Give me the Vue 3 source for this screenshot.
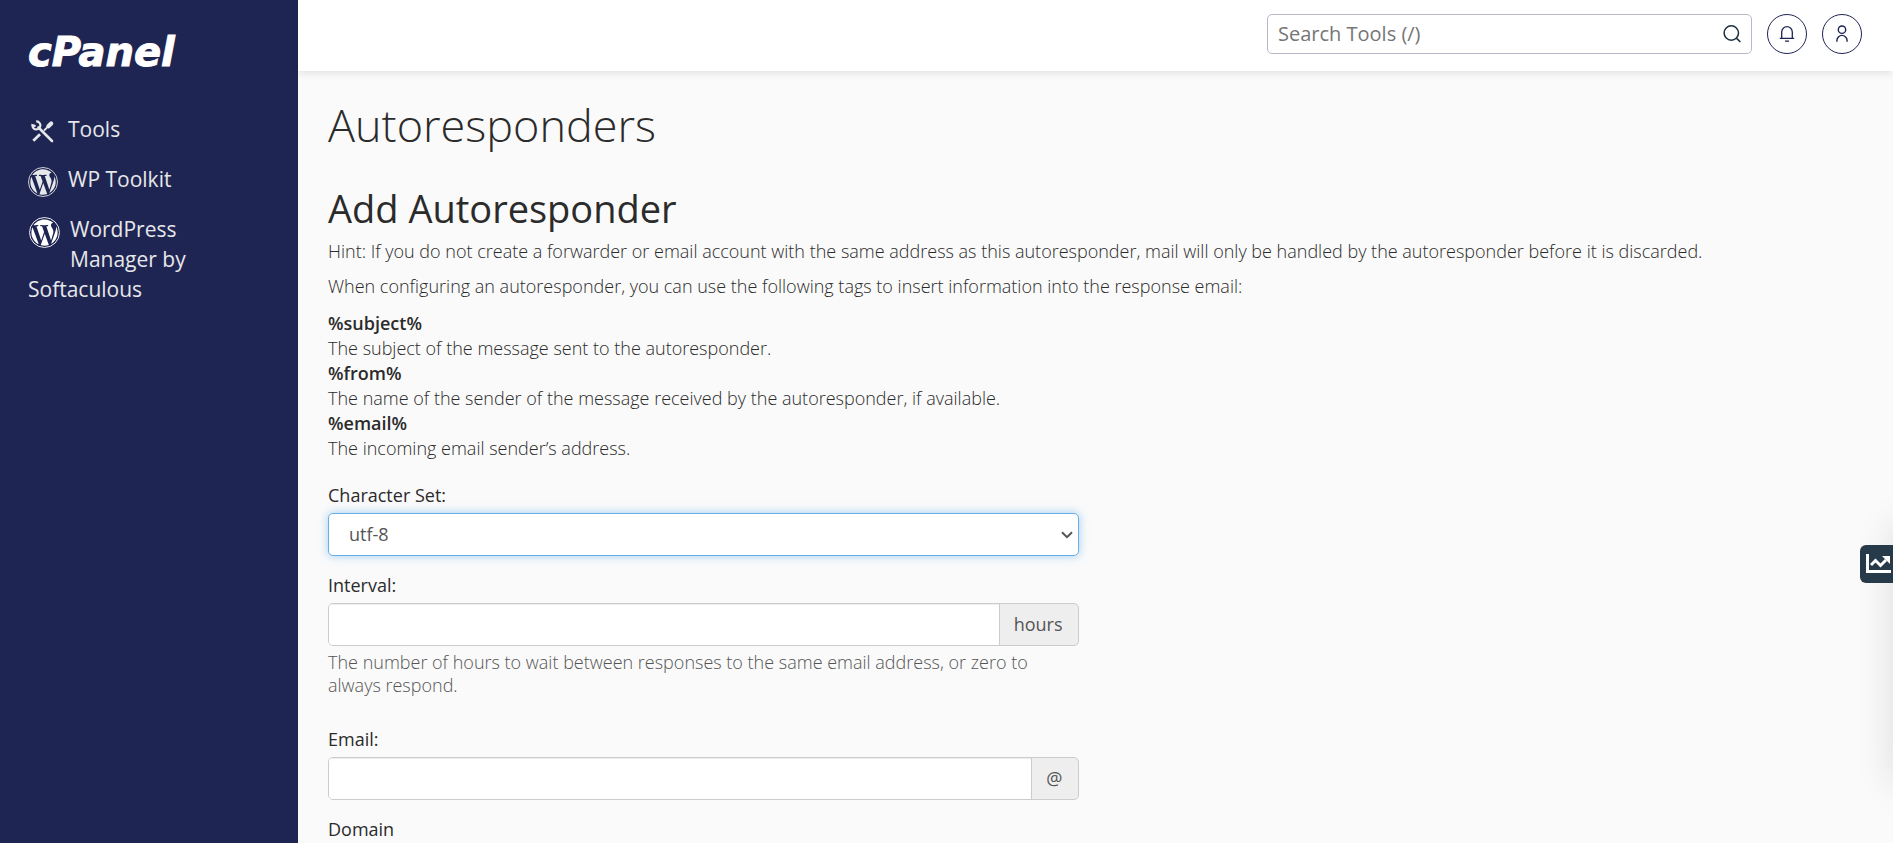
<script setup>
import { ref } from 'vue'

const charset = ref('utf-8')
const interval = ref('')
const email = ref('')
const search = ref('')

const tags = [
  { name: '%subject%', text: 'The subject of the message sent to the autoresponder.' },
  { name: '%from%', text: 'The name of the sender of the message received by the autoresponder, if available.' },
  { name: '%email%', text: 'The incoming email sender’s address.' },
]

const wpPath =
  'M21.469 6.825c.84 1.537 1.318 3.3 1.318 5.175 0 3.979-2.156 7.456-5.363 9.325l3.295-9.527c.615-1.54.82-2.771.82-3.864 0-.405-.026-.78-.07-1.11m-7.981.105c.647-.03 1.232-.105 1.232-.105.582-.075.514-.93-.067-.899 0 0-1.755.135-2.88.135-1.064 0-2.85-.15-2.85-.15-.585-.03-.661.855-.075.885 0 0 .54.061 1.125.09l1.68 4.605-2.37 7.08L5.354 6.9c.649-.03 1.234-.1 1.234-.1.585-.075.516-.93-.065-.896 0 0-1.746.138-2.874.138-.2 0-.438-.008-.69-.015C4.911 3.15 8.235 1.215 12 1.215c2.809 0 5.365 1.072 7.286 2.833-.046-.003-.091-.009-.141-.009-1.06 0-1.812.923-1.812 1.914 0 .89.513 1.643 1.06 2.531.411.72.89 1.643.89 2.977 0 .915-.354 1.994-.821 3.479l-1.075 3.585-3.9-11.61.001.014zM12 22.784c-1.059 0-2.081-.153-3.048-.437l3.237-9.406 3.315 9.087c.024.053.05.101.078.149-1.12.393-2.325.609-3.582.609M1.211 12c0-1.564.336-3.05.935-4.39L7.29 21.709C3.694 19.96 1.212 16.271 1.211 12'
</script>

<template>
  <div class="layout">
    <aside class="sidebar">
      <a class="logo" href="#" aria-label="cPanel home">cPanel</a>
      <nav class="nav" aria-label="Main">
        <a class="nav-item" href="#">
          <svg class="nav-icon" viewBox="0 0 30 30" aria-hidden="true">
            <g fill="none" stroke="currentColor" stroke-linecap="round">
              <path d="M10.5 10.5 24 24" stroke-width="2.6" />
              <path d="M5.3 23.7 12 17.2" stroke-width="2.8" stroke-linecap="butt" />
              <path d="M16.5 13 20 9.6" stroke-width="1.8" />
              <path d="M20.4 9.2 23.2 6.4" stroke-width="4.2" />
              <path d="M8.2 4.4a4 4 0 1 1-3.8 3.8L7.6 9" stroke-width="2.2" stroke-linecap="butt" />
            </g>
          </svg>
          Tools
        </a>
        <a class="nav-item" href="#">
          <svg class="nav-icon" viewBox="0 0 24 24" aria-hidden="true">
            <circle cx="12" cy="12" r="11.6" fill="none" stroke="currentColor" stroke-width=".7" />
            <path :d="wpPath" fill="currentColor" transform="translate(.7 .7) scale(.942)" />
          </svg>
          WP Toolkit
        </a>
        <a class="nav-item" href="#">
          <svg class="nav-icon nav-icon-plugin" viewBox="0 0 24 24" aria-hidden="true">
            <circle cx="12" cy="12" r="11.6" fill="none" stroke="currentColor" stroke-width=".7" />
            <path :d="wpPath" fill="currentColor" transform="translate(.7 .7) scale(.942)" />
          </svg>
          WordPress Manager by Softaculous
        </a>
      </nav>
    </aside>

    <div class="page">
      <header class="topbar">
        <form class="search" role="search" @submit.prevent>
          <input v-model="search" type="text" placeholder="Search Tools (/)" aria-label="Search Tools" />
          <button class="search-btn" type="submit" aria-label="Search">
            <svg viewBox="0 0 20 20" width="20" height="20" fill="none" stroke="currentColor" stroke-width="1.5" aria-hidden="true">
              <circle cx="9.3" cy="9" r="7.2" />
              <path d="m14.4 14.1 4 3.9" />
            </svg>
          </button>
        </form>
        <button class="round" type="button" aria-label="Notifications">
          <svg viewBox="0 0 18 18" width="18" height="18" fill="none" stroke="currentColor" stroke-width="1.3" aria-hidden="true">
            <path d="M1.8 13.4h14.4M3.7 13.4V7a5.3 5.3 0 0 1 10.6 0v6.4M7 16.2h4" />
          </svg>
        </button>
        <button class="round" type="button" aria-label="Account">
          <svg viewBox="0 0 18 18" width="18" height="18" fill="none" stroke="currentColor" stroke-width="1.4" aria-hidden="true">
            <circle cx="9" cy="4.7" r="3.7" />
            <path d="M3.9 16.8v-1.3a5.1 5.1 0 0 1 10.2 0v1.3" />
          </svg>
        </button>
      </header>

      <main class="content">
        <h1>Autoresponders</h1>
        <h2>Add Autoresponder</h2>
        <p>Hint: If you do not create a forwarder or email account with the same address as this autoresponder, mail will only be handled by the autoresponder before it is discarded.</p>
        <p>When configuring an autoresponder, you can use the following tags to insert information into the response email:</p>
        <dl>
          <template v-for="tag in tags" :key="tag.name">
            <dt>{{ tag.name }}</dt>
            <dd>{{ tag.text }}</dd>
          </template>
        </dl>

        <form class="form" @submit.prevent>
          <div class="field">
            <label for="charset">Character Set:</label>
            <div class="select">
              <select id="charset" v-model="charset">
                <option>utf-8</option>
              </select>
              <svg viewBox="0 0 12 8" width="12" height="8" fill="none" stroke="currentColor" stroke-width="2" aria-hidden="true">
                <path d="m1 1.2 5 5 5-5" />
              </svg>
            </div>
          </div>
          <div class="field">
            <label for="interval">Interval:</label>
            <div class="group">
              <input id="interval" v-model="interval" type="text" aria-describedby="interval-help" />
              <span class="addon">hours</span>
            </div>
            <div id="interval-help" class="help">The number of hours to wait between responses to the same email address, or zero to always respond.</div>
          </div>
          <div class="field">
            <label for="email">Email:</label>
            <div class="group">
              <input id="email" v-model="email" type="text" />
              <span class="addon">@</span>
            </div>
          </div>
          <div class="domain">Domain</div>
        </form>
      </main>
    </div>

    <div class="drawer">
      <button class="drawer-tab" type="button" aria-label="Show statistics">
        <svg viewBox="0 0 26 22" width="26" height="22" aria-hidden="true">
          <path d="M1 1h3v16h22v3H1z" fill="#fff" />
          <path d="m6 12 4.5-4.5 5 5L21 7" fill="none" stroke="#fff" stroke-width="3" />
          <path d="M17 3h8v8z" fill="#fff" />
        </svg>
      </button>
    </div>
  </div>
</template>

<style>
body {
  margin: 0;
  background: #fafafa;
}
</style>

<style scoped>
.layout {
  display: grid;
  grid-template-columns: 298px minmax(0, 1fr);
  min-height: 100vh;
  font-family: "Open Sans", "Noto Sans", sans-serif;
  font-size: 18px;
  line-height: 25px;
  color: #2b2b2b;
}

.layout * {
  box-sizing: border-box;
}

button,
input,
select {
  font: inherit;
  color: inherit;
}

button {
  display: flex;
  align-items: center;
  justify-content: center;
  padding: 0;
  background: none;
  border: 0;
  cursor: pointer;
}

.sidebar {
  background: #1f2552;
  color: #e6e7ea;
}

.logo {
  display: block;
  padding: 28px 28px 0;
  font: italic bold 40px/48px "DejaVu Sans", sans-serif;
  color: #fff;
  text-decoration: none;
  -webkit-text-stroke: 1px #fff;
}

.nav {
  padding-top: 28px;
}

.nav-item {
  display: flow-root;
  padding: 10px 80px 10px 28px;
  font-size: 21px;
  line-height: 30px;
  color: inherit;
  text-decoration: none;
}

.nav-icon {
  float: left;
  width: 30px;
  height: 30px;
  margin: 3px 10px -3px 0;
}

.nav-icon-plugin {
  width: 31px;
  height: 31px;
  margin-right: 10px;
  margin-left: 1px;
  color: #fff;
}

.topbar {
  display: flex;
  justify-content: flex-end;
  gap: 15px;
  padding: 14px 31px 17px;
  background: #fff;
  box-shadow: 0 2px 8px rgba(0, 0, 0, 0.1);
}

.search {
  display: flex;
  width: 485px;
  height: 40px;
  background: #fff;
  border: 1px solid #b9b9c9;
  border-radius: 5px;
}

.search input {
  flex: 1;
  min-width: 0;
  padding: 0 10px 2px;
  font-size: 20px;
  background: none;
  border: 0;
  outline: 0;
}

.search input::placeholder {
  color: #757575;
}

.search-btn {
  width: 38px;
  color: #1d2f3f;
}

.round {
  width: 40px;
  height: 40px;
  border: 1px solid #1f2552;
  border-radius: 50%;
  color: #1f2552;
}

.content {
  padding: 23px 30px 0;
}

h1 {
  margin: 0 0 26px;
  font-size: 45px;
  font-weight: 300;
  line-height: 62px;
}

h2 {
  margin: 0 0 5px;
  font-size: 38px;
  font-weight: 500;
  line-height: 52px;
}

p {
  margin: 0 0 10px;
  font-weight: 300;
}

dl {
  margin: 12px 0 0;
}

dt {
  font-weight: 600;
}

dd {
  margin: 0;
  font-weight: 300;
}

.form {
  width: calc(50% - 17px);
  padding-top: 22px;
}

.field {
  margin-bottom: 17px;
}

.field label,
.domain {
  display: block;
  margin-bottom: 5px;
  font-weight: 500;
}

.domain {
  margin-bottom: 0;
}

.select {
  display: grid;
  align-items: center;
  color: #555;
}

.select select,
.select svg {
  grid-area: 1 / 1;
}

.select select {
  width: 100%;
  height: 43px;
  padding: 0 20px;
  appearance: none;
  background: #fff;
  border: 1px solid #66afe9;
  border-radius: 5px;
  box-shadow: 0 0 10px rgba(102, 175, 233, 0.6);
  outline: 0;
}

.select svg {
  justify-self: end;
  margin-right: 6px;
  pointer-events: none;
}

.group {
  display: flex;
  height: 43px;
  background: #eee;
  border: 1px solid #ccc;
  border-radius: 5px;
  overflow: hidden;
}

.group input {
  flex: 1;
  min-width: 0;
  padding: 0 15px;
  background: #fff;
  border: 0;
  border-right: 1px solid #ccc;
  box-shadow: inset 0 1px 1px rgba(0, 0, 0, 0.075);
  outline: 0;
}

.addon {
  display: flex;
  align-items: center;
  padding: 0 15px 0 14px;
  color: #555;
}

.help {
  padding: 5px 0 13px;
  line-height: 23px;
  font-weight: 300;
  color: #555;
}

.drawer {
  position: fixed;
  top: 525px;
  left: 100%;
  width: 300px;
  height: 258px;
  box-shadow: 0 0 36px rgba(0, 0, 0, 0.12);
}

.drawer-tab {
  position: absolute;
  top: 20px;
  right: 100%;
  width: 33px;
  height: 38px;
  padding-left: 3px;
  background: #273a4a;
  border-radius: 6px 0 0 6px;
}
</style>
